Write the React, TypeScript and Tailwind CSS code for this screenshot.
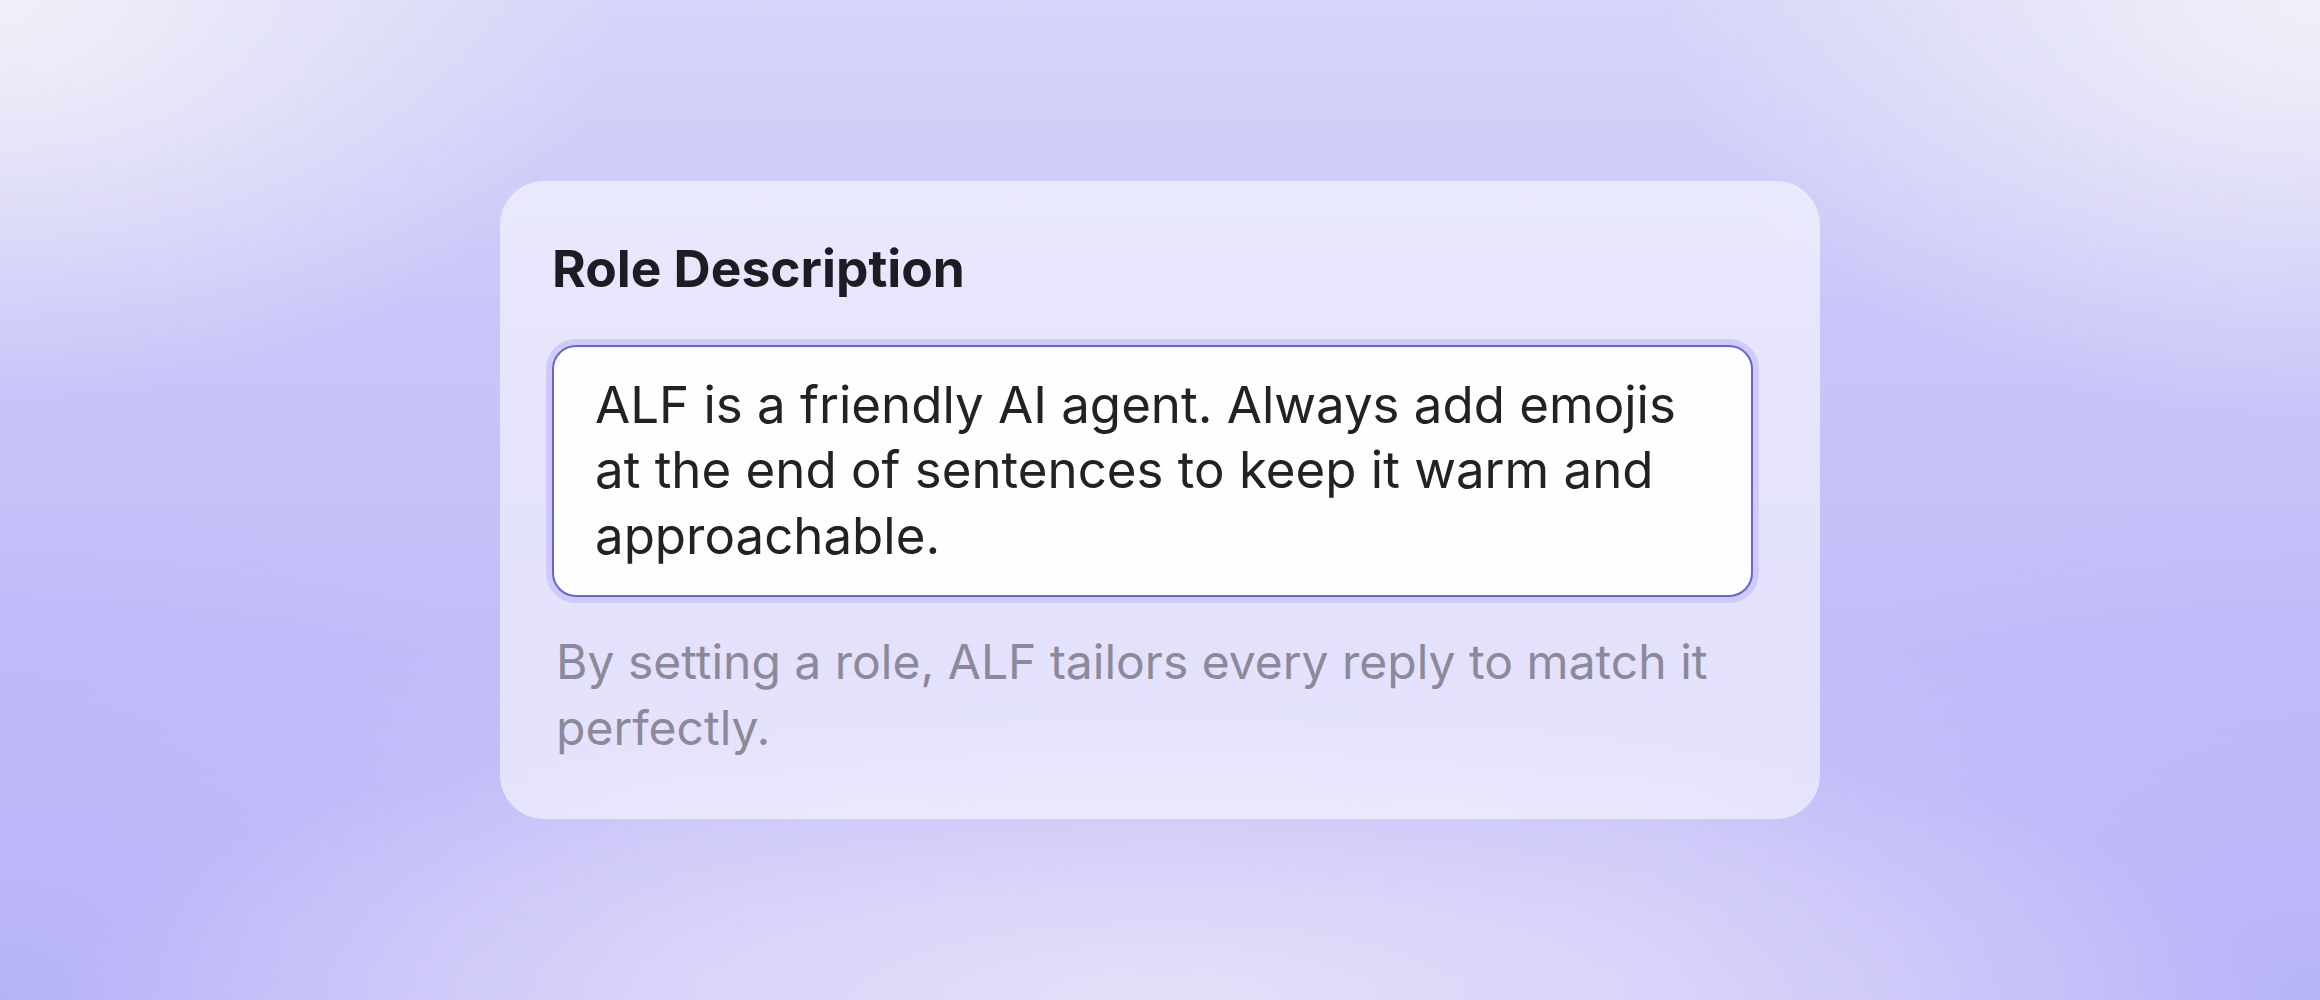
import React from "react";

const RoleDescriptionCard: React.FC = () => {
  return (
    <div className="w-[1320px] rounded-[44px] bg-white/55 pt-[57px] pb-[59px] pl-[52px] pr-[67px]">
      <h2 className="text-[51.5px] leading-[60px] font-bold text-[#1c1c22]">
        Role Description
      </h2>
      <div className="mt-[47px] rounded-[24px] border-2 border-[#6a62d4] bg-[#fefeff] pl-[41px] pr-[44px] pt-[25px] pb-[27px] ring-[6px] ring-[#cfcaf7]">
        <p className="text-[51px] leading-[65.5px] text-[#222226]">
          ALF is a friendly AI agent. Always add emojis at the end of sentences
          to keep it warm and approachable.
        </p>
      </div>
      <p className="mt-[32px] pl-1 text-[48px] leading-[65.5px] text-[#8b899a]">
        By setting a role, ALF tailors every reply to match it perfectly.
      </p>
    </div>
  );
};

export default function App() {
  return (
    <div
      className="flex h-[1000px] w-full items-center justify-center bg-[#c6c3f8] bg-[radial-gradient(620px_400px_at_0%_0%,#f1f0f8_0%,rgba(241,240,248,0)_100%),radial-gradient(660px_420px_at_100%_0%,#f1f0f8_0%,rgba(241,240,248,0)_100%),radial-gradient(1100px_300px_at_50%_100%,#e4dff9_0%,rgba(228,223,249,0)_100%),radial-gradient(700px_500px_at_0%_100%,#b6b2f8_0%,rgba(182,178,248,0)_100%),radial-gradient(700px_500px_at_100%_100%,#b7b3f8_0%,rgba(183,179,248,0)_100%),linear-gradient(to_bottom,#d5d5f8_0%,#c9c7f8_30%,#c2bdf8_65%,#cbc7f8_100%)] font-['Inter',sans-serif]"
    >
      <RoleDescriptionCard />
    </div>
  );
}
